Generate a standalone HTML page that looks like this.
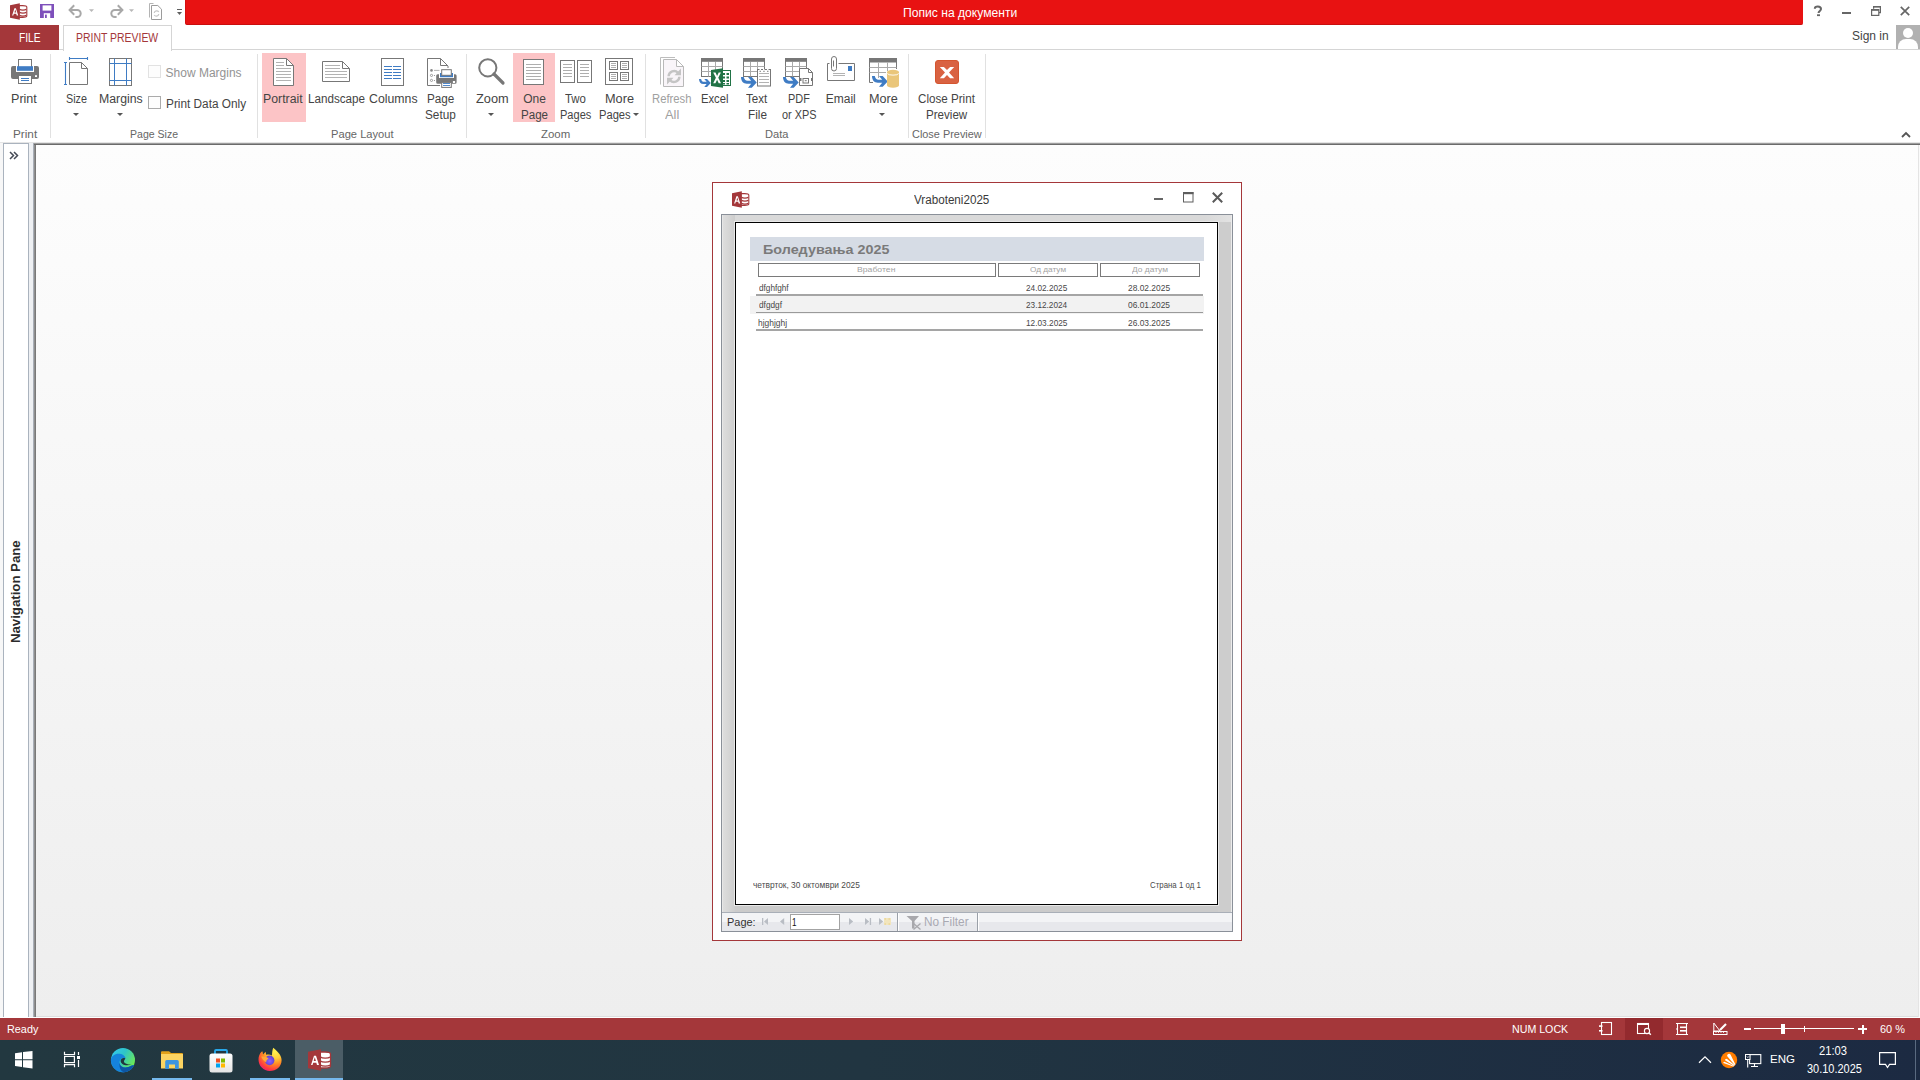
<!DOCTYPE html>
<html><head><meta charset="utf-8">
<style>
html,body{margin:0;padding:0;}
body{width:1920px;height:1080px;overflow:hidden;position:relative;background:#fff;font-family:"Liberation Sans",sans-serif;}
.a{position:absolute;}
.t{position:absolute;white-space:nowrap;}
svg{position:absolute;overflow:visible;}
</style></head><body>
<div class="a" style="left:185px;top:0px;width:1618px;height:25px;background:#e81212;box-sizing:border-box;border-bottom:1px solid #c90e0e;border-left:1px solid #d40f0f;border-radius:0 0 2px 2px;"></div>
<div class="t" style="left:902.78px;top:6.57px;font-size:12.5px;line-height:12.5px;color:#ffffff;transform:scaleX(0.9698);transform-origin:0 0;">Попис на документи</div>
<svg style="left:10px;top:3px" width="17" height="17" viewBox="0 0 17 17">
 <path d="M9 2.6 h3.6 a4.2 1.5 0 0 1 4.2 1.5 v8.8 a4.2 1.5 0 0 1 -4.2 1.5 H9z" fill="#fff" stroke="#a4373a" stroke-width="1.1"/>
 <path d="M9.5 6.3 a3.7 1.3 0 0 0 6.8 0 M9.5 9.3 a3.7 1.3 0 0 0 6.8 0 M9.5 12.3 a3.7 1.3 0 0 0 6.8 0" fill="none" stroke="#a4373a" stroke-width="1.1"/>
 <path d="M0 2.2 L9.8 0.3 V16.7 L0 14.8z" fill="#a4373a"/>
 <path d="M2.1 12.4 L4.4 5.2 h1.5 L8.2 12.4 h-1.5 l-0.5-1.7 h-2.4 l-0.5 1.7z M4.5 9.4 h1.7 L5.2 6.4z" fill="#fff"/>
</svg>
<svg style="left:40px;top:4px" width="14" height="14" viewBox="0 0 14 14">
 <rect x="0" y="0" width="14" height="14" fill="#7e50bb"/>
 <rect x="2.6" y="1.4" width="8.8" height="5.2" fill="#fff"/>
 <rect x="3.8" y="9.2" width="6.4" height="4.8" fill="#fff"/>
 <rect x="5" y="10.6" width="1.8" height="3.4" fill="#7e50bb"/>
</svg>
<svg style="left:68px;top:4px" width="28" height="14" viewBox="0 0 28 14">
 <path d="M2.5 6 H9.2 a3.5 3.5 0 0 1 0 7 H7.4" fill="none" stroke="#a8a8a8" stroke-width="2"/>
 <path d="M6.2 1.3 L1.6 6 L6.2 10.7" fill="none" stroke="#a8a8a8" stroke-width="2"/>
 <path d="M21 5.3 h5 l-2.5 2.6z" fill="#b8b8b8"/>
</svg>
<svg style="left:108px;top:4px" width="28" height="14" viewBox="0 0 28 14">
 <path d="M13.5 6 H6.8 a3.5 3.5 0 0 0 0 7 H8.6" fill="none" stroke="#a8a8a8" stroke-width="2"/>
 <path d="M9.8 1.3 L14.4 6 L9.8 10.7" fill="none" stroke="#a8a8a8" stroke-width="2"/>
 <path d="M21 5.3 h5 l-2.5 2.6z" fill="#b8b8b8"/>
</svg>
<svg style="left:149px;top:3px" width="14" height="17" viewBox="0 0 14 17">
 <path d="M0.5 14.5 V0.5 H4.5" fill="none" stroke="#b4b4b4" stroke-width="1"/>
 <path d="M2.5 2.5 H8.8 L12.5 6.2 V16.5 H2.5z" fill="#fff" stroke="#9c9c9c" stroke-width="1"/>
 <path d="M5.2 10 a2.5 2.5 0 0 1 4.6 -1 M9.8 11 a2.5 2.5 0 0 1 -4.6 1" fill="none" stroke="#c6c6c6" stroke-width="1.2"/>
</svg>
<svg style="left:176px;top:8px" width="7" height="8" viewBox="0 0 7 8">
 <rect x="1" y="1" width="5" height="1" fill="#5f5f5f"/>
 <path d="M1 4 h5 l-2.5 3z" fill="#5f5f5f"/>
</svg>
<svg style="left:1814px;top:6px" width="8" height="10" viewBox="0 0 8 10"><path d="M0.8 2.8 C0.8 1.2 2 0.5 3.8 0.5 C5.6 0.5 7 1.4 7 3 C7 4.8 4.6 5 4.6 6.8 V7" fill="none" stroke="#666" stroke-width="2"/><rect x="3" y="8.3" width="3" height="1.8" fill="#666"/></svg>
<div class="a" style="left:1842px;top:12px;width:9px;height:2px;background:#666;"></div>
<svg style="left:1871px;top:6px" width="11" height="10" viewBox="0 0 11 10">
 <path d="M2.6 2.8 V0.6 H9.4 V6.6 H8" fill="none" stroke="#666" stroke-width="1.2"/>
 <rect x="0.6" y="3.6" width="7.2" height="5.8" fill="none" stroke="#666" stroke-width="1.2"/>
 <rect x="0.6" y="3.2" width="7.2" height="1.6" fill="#666"/>
 <rect x="2.6" y="0" width="7" height="1.5" fill="#666"/>
</svg>
<svg style="left:1900px;top:6px" width="10" height="10" viewBox="0 0 10 10"><path d="M0.8 0.8 L9.2 9.2 M9.2 0.8 L0.8 9.2" stroke="#666" stroke-width="1.7"/></svg>
<div class="a" style="left:0px;top:49px;width:1920px;height:1px;background:#d5d5d5;"></div>
<div class="a" style="left:0px;top:25px;width:59px;height:25px;background:#a4373a;"></div>
<div class="t" style="left:18.86px;top:31.80px;font-size:12px;line-height:12px;color:#ffffff;transform:scaleX(0.8512);transform-origin:0 0;">FILE</div>
<div class="a" style="left:63px;top:25px;width:107px;height:25px;background:#fff;border:1px solid #d5d5d5;border-bottom:none;"></div>
<div class="t" style="left:75.64px;top:31.80px;font-size:12px;line-height:12px;color:#a4373a;transform:scaleX(0.8703);transform-origin:0 0;">PRINT PREVIEW</div>
<div class="t" style="left:1852.46px;top:30.27px;font-size:12.5px;line-height:12.5px;color:#444;transform:scaleX(0.9600);transform-origin:0 0;">Sign in</div>
<div class="a" style="left:1896px;top:25px;width:24px;height:24px;background:#b1b1b1;overflow:hidden;">
 <div class="a" style="left:7px;top:3px;width:10px;height:10px;border-radius:50%;background:#fff;"></div>
 <div class="a" style="left:2px;top:14px;width:20px;height:14px;border-radius:8px 8px 0 0;background:#fff;"></div>
</div>
<svg style="left:1901px;top:131px" width="10" height="7" viewBox="0 0 10 7"><path d="M1 6 L5 2 L9 6" fill="none" stroke="#555" stroke-width="1.8"/></svg>
<div class="a" style="left:50px;top:54px;width:1px;height:84px;background:#e1e1e1;"></div>
<div class="a" style="left:257px;top:54px;width:1px;height:84px;background:#e1e1e1;"></div>
<div class="a" style="left:466px;top:54px;width:1px;height:84px;background:#e1e1e1;"></div>
<div class="a" style="left:645px;top:54px;width:1px;height:84px;background:#e1e1e1;"></div>
<div class="a" style="left:908px;top:54px;width:1px;height:84px;background:#e1e1e1;"></div>
<div class="a" style="left:985px;top:54px;width:1px;height:84px;background:#e1e1e1;"></div>
<div class="a" style="left:262px;top:53px;width:44px;height:69px;background:#fcc4c6;"></div>
<div class="a" style="left:513px;top:53px;width:42px;height:69px;background:#fcc4c6;"></div>
<div class="t" style="left:11.36px;top:92.80px;font-size:12px;line-height:12px;color:#444;transform:scaleX(1.0475);transform-origin:0 0;">Print</div>
<div class="t" style="left:65.61px;top:92.80px;font-size:12px;line-height:12px;color:#444;transform:scaleX(0.9017);transform-origin:0 0;">Size</div>
<div class="t" style="left:98.59px;top:92.80px;font-size:12px;line-height:12px;color:#444;transform:scaleX(1.0247);transform-origin:0 0;">Margins</div>
<div class="t" style="left:165.56px;top:67.00px;font-size:12px;line-height:12px;color:#939393;">Show Margins</div>
<div class="t" style="left:165.73px;top:98.00px;font-size:12px;line-height:12px;color:#444;transform:scaleX(0.9846);transform-origin:0 0;">Print Data Only</div>
<div class="t" style="left:263.29px;top:92.80px;font-size:12px;line-height:12px;color:#444;transform:scaleX(1.0242);transform-origin:0 0;">Portrait</div>
<div class="t" style="left:307.54px;top:92.80px;font-size:12px;line-height:12px;color:#444;transform:scaleX(0.9719);transform-origin:0 0;">Landscape</div>
<div class="t" style="left:368.68px;top:92.80px;font-size:12px;line-height:12px;color:#444;transform:scaleX(1.0255);transform-origin:0 0;">Columns</div>
<div class="t" style="left:427.43px;top:92.80px;font-size:12px;line-height:12px;color:#444;transform:scaleX(0.9766);transform-origin:0 0;">Page</div>
<div class="t" style="left:425.37px;top:108.50px;font-size:12px;line-height:12px;color:#444;transform:scaleX(0.9825);transform-origin:0 0;">Setup</div>
<div class="t" style="left:475.58px;top:92.80px;font-size:12px;line-height:12px;color:#444;transform:scaleX(1.0648);transform-origin:0 0;">Zoom</div>
<div class="t" style="left:523.23px;top:92.80px;font-size:12px;line-height:12px;color:#444;">One</div>
<div class="t" style="left:520.64px;top:108.50px;font-size:12px;line-height:12px;color:#444;transform:scaleX(0.9653);transform-origin:0 0;">Page</div>
<div class="t" style="left:565.24px;top:92.80px;font-size:12px;line-height:12px;color:#444;transform:scaleX(0.9510);transform-origin:0 0;">Two</div>
<div class="t" style="left:559.89px;top:108.50px;font-size:12px;line-height:12px;color:#444;transform:scaleX(0.9200);transform-origin:0 0;">Pages</div>
<div class="t" style="left:604.75px;top:92.80px;font-size:12px;line-height:12px;color:#444;transform:scaleX(1.0608);transform-origin:0 0;">More</div>
<div class="t" style="left:598.78px;top:108.50px;font-size:12px;line-height:12px;color:#444;transform:scaleX(0.9292);transform-origin:0 0;">Pages</div>
<div class="t" style="left:651.77px;top:92.80px;font-size:12px;line-height:12px;color:#a0a0a0;transform:scaleX(0.9389);transform-origin:0 0;">Refresh</div>
<div class="t" style="left:665.17px;top:108.50px;font-size:12px;line-height:12px;color:#a0a0a0;transform:scaleX(1.0711);transform-origin:0 0;">All</div>
<div class="t" style="left:700.77px;top:92.80px;font-size:12px;line-height:12px;color:#444;transform:scaleX(0.9368);transform-origin:0 0;">Excel</div>
<div class="t" style="left:745.84px;top:92.80px;font-size:12px;line-height:12px;color:#444;transform:scaleX(0.9616);transform-origin:0 0;">Text</div>
<div class="t" style="left:747.63px;top:108.50px;font-size:12px;line-height:12px;color:#444;transform:scaleX(0.9820);transform-origin:0 0;">File</div>
<div class="t" style="left:787.70px;top:92.80px;font-size:12px;line-height:12px;color:#444;transform:scaleX(0.9099);transform-origin:0 0;">PDF</div>
<div class="t" style="left:782.14px;top:108.50px;font-size:12px;line-height:12px;color:#444;transform:scaleX(0.9064);transform-origin:0 0;">or XPS</div>
<div class="t" style="left:825.71px;top:92.80px;font-size:12px;line-height:12px;color:#444;">Email</div>
<div class="t" style="left:868.76px;top:92.80px;font-size:12px;line-height:12px;color:#444;transform:scaleX(1.0530);transform-origin:0 0;">More</div>
<div class="t" style="left:918.02px;top:92.80px;font-size:12px;line-height:12px;color:#444;transform:scaleX(0.9691);transform-origin:0 0;">Close Print</div>
<div class="t" style="left:925.64px;top:108.50px;font-size:12px;line-height:12px;color:#444;transform:scaleX(0.9657);transform-origin:0 0;">Preview</div>
<div class="t" style="left:12.73px;top:129.05px;font-size:11px;line-height:11px;color:#666;transform:scaleX(1.0687);transform-origin:0 0;">Print</div>
<div class="t" style="left:129.73px;top:129.05px;font-size:11px;line-height:11px;color:#666;transform:scaleX(0.9578);transform-origin:0 0;">Page Size</div>
<div class="t" style="left:330.58px;top:129.05px;font-size:11px;line-height:11px;color:#666;transform:scaleX(1.0136);transform-origin:0 0;">Page Layout</div>
<div class="t" style="left:540.73px;top:129.05px;font-size:11px;line-height:11px;color:#666;transform:scaleX(1.0395);transform-origin:0 0;">Zoom</div>
<div class="t" style="left:764.99px;top:129.05px;font-size:11px;line-height:11px;color:#666;transform:scaleX(1.0076);transform-origin:0 0;">Data</div>
<div class="t" style="left:912.15px;top:129.05px;font-size:11px;line-height:11px;color:#666;transform:scaleX(0.9915);transform-origin:0 0;">Close Preview</div>
<svg style="left:72.5px;top:113px" width="6" height="3" viewBox="0 0 6 3"><path d="M0 0 H6 L3 3z" fill="#555"/></svg>
<svg style="left:117.4px;top:113px" width="6" height="3" viewBox="0 0 6 3"><path d="M0 0 H6 L3 3z" fill="#555"/></svg>
<svg style="left:488.4px;top:113px" width="6" height="3" viewBox="0 0 6 3"><path d="M0 0 H6 L3 3z" fill="#555"/></svg>
<svg style="left:879.3px;top:113px" width="6" height="3" viewBox="0 0 6 3"><path d="M0 0 H6 L3 3z" fill="#555"/></svg>
<svg style="left:632.8px;top:113px" width="6" height="3" viewBox="0 0 6 3"><path d="M0 0 H6 L3 3z" fill="#555"/></svg>
<div class="a" style="left:148px;top:65px;width:13px;height:13px;background:#fdfdfd;box-sizing:border-box;border:1px solid #e2e2e2;"></div>
<div class="a" style="left:148px;top:96px;width:13px;height:13px;background:#fdfdfd;box-sizing:border-box;border:1px solid #ababab;"></div>
<svg style="left:11px;top:59px" width="28" height="26" viewBox="0 0 28 26">
 <path d="M2 7 H5 V13 H23 V7 H26 a2 2 0 0 1 2 2 V18 a2 2 0 0 1 -2 2 H2 a2 2 0 0 1 -2 -2 V9 a2 2 0 0 1 2 -2z" fill="#777"/>
 <rect x="7.5" y="0.5" width="13" height="8" fill="#fff" stroke="#777"/>
 <rect x="6" y="7.2" width="16" height="4.6" fill="#3f7cc4"/>
 <rect x="7.5" y="16.5" width="13" height="8" fill="#fff" stroke="#777"/>
 <rect x="10" y="19" width="8" height="1" fill="#3f7cc4"/>
 <rect x="10" y="21" width="8" height="1" fill="#3f7cc4"/>
 <rect x="24" y="16.2" width="2" height="1.8" fill="#fff"/>
</svg>
<svg style="left:63px;top:56px" width="27" height="30" viewBox="0 0 27 30">
 <path d="M2.5 6.5 V28.5 M1 6.5 H4 M1 28.5 H4 M6.5 2.5 H24.5 M6.5 1 V4 M24.5 1 V4" stroke="#3f7cc4" stroke-width="1.1" fill="none"/>
 <path d="M6.5 6.5 H18.5 L24.5 12.5 V28.5 H6.5z M18.5 6.5 V12.5 H24.5" fill="#fff" stroke="#777" stroke-width="1"/>
</svg>
<svg style="left:109px;top:58px" width="23" height="28" viewBox="0 0 23 28">
 <rect x="0.5" y="0.5" width="22" height="27" fill="#fff" stroke="#777"/>
 <path d="M5.5 0.5 V27.5 M17.5 0.5 V27.5 M0.5 5.5 H22.5 M0.5 22.5 H22.5" stroke="#3f7cc4" stroke-width="1"/>
</svg>
<svg style="left:273px;top:58px" width="21" height="28" viewBox="0 0 21 28">
 <path d="M0.5 0.5 H13.5 L20.5 7.5 V27.5 H0.5z" fill="#fff"/><path d="M13.5 0.5 L20.5 7.5 H13.5z" fill="#fff"/>
 <path d="M0.5 0.5 H13.5 L20.5 7.5 V27.5 H0.5z M13.5 0.5 V7.5 H20.5" fill="none" stroke="#777" stroke-width="1"/>
 <path d="M3 4.5 H11 M3 7.5 H11 M3 10.5 H18 M3 13.5 H18 M3 16.5 H18 M3 19.5 H18 M3 22.5 H18" stroke="#aaa" stroke-width="0.9"/>
</svg>
<svg style="left:322px;top:61px" width="28" height="21" viewBox="0 0 28 21">
 <path d="M0.5 0.5 H20.5 L27.5 7.5 V20.5 H0.5z M20.5 0.5 V7.5 H27.5" fill="#fff" stroke="#777" stroke-width="1"/>
 <path d="M3 4.5 H18 M3 7.5 H18 M3 10.5 H25 M3 13.5 H25 M3 16.5 H25" stroke="#aaa" stroke-width="0.9"/>
</svg>
<svg style="left:381px;top:58px" width="23" height="28" viewBox="0 0 23 28">
 <rect x="0.5" y="0.5" width="22" height="27" fill="#fff" stroke="#777"/>
 <path d="M3 8.5 H11 M12 8.5 H20 M3 11.5 H11 M12 11.5 H20 M3 14.5 H11 M12 14.5 H20 M3 17.5 H11 M12 17.5 H20 M3 20.5 H11 M12 20.5 H20" stroke="#3f7cc4" stroke-width="1"/>
</svg>
<svg style="left:427px;top:58px" width="30" height="30" viewBox="0 0 30 30">
 <path d="M13 27.5 H0.5 V0.5 H13.5 L21 8 V10" fill="#fff" stroke="#777" stroke-width="1"/>
 <path d="M13.5 0.5 V7.5 H21" fill="none" stroke="#777" stroke-width="1"/>
 <circle cx="4.5" cy="12.4" r="1.3" fill="#888"/>
 <path d="M7 12.4 H12.5" stroke="#aaa" stroke-width="0.9"/>
 <circle cx="4.5" cy="17.4" r="1.1" fill="none" stroke="#888" stroke-width="0.8"/>
 <circle cx="4.5" cy="22.4" r="1.1" fill="none" stroke="#888" stroke-width="0.8"/>
 <rect x="7" y="17" width="1" height="1" fill="#999"/><rect x="7" y="22" width="1" height="1" fill="#999"/>
 <path d="M10.7 16.2 H12 V20 H27 V16.2 H28.1 a1.5 1.5 0 0 1 1.5 1.5 V24.3 a1.5 1.5 0 0 1 -1.5 1.5 H10.7 a1.5 1.5 0 0 1 -1.5 -1.5 V17.7 a1.5 1.5 0 0 1 1.5 -1.5z" fill="#777"/>
 <rect x="13" y="15" width="13" height="4.2" fill="#3f7cc4"/>
 <rect x="14.7" y="11.7" width="9.6" height="5.6" fill="#fff" stroke="#777" stroke-width="1"/>
 <rect x="14.7" y="24.4" width="9.6" height="5" fill="#fff" stroke="#777" stroke-width="1"/>
 <rect x="16" y="25" width="7" height="0.9" fill="#3f7cc4"/><rect x="16" y="27" width="7" height="0.9" fill="#3f7cc4"/>
 <rect x="25.9" y="23" width="2.2" height="2" fill="#fff"/>
</svg>
<svg style="left:477px;top:57px" width="29" height="29" viewBox="0 0 29 29">
 <circle cx="10.8" cy="10.8" r="8.6" fill="none" stroke="#777" stroke-width="2"/>
 <path d="M17 17 L26 26" stroke="#777" stroke-width="3.2" stroke-linecap="round"/>
</svg>
<svg style="left:523px;top:59px" width="21" height="26" viewBox="0 0 21 26">
 <rect x="0.5" y="0.5" width="20" height="25" fill="#fff" stroke="#777"/>
 <path d="M3 5.5 H18 M3 8.5 H18 M3 11.5 H18 M3 14.5 H18 M3 17.5 H18 M3 20.5 H18" stroke="#999" stroke-width="0.8"/>
</svg>
<svg style="left:560px;top:60px" width="33" height="23" viewBox="0 0 33 23">
 <rect x="0.5" y="0.5" width="14" height="22" fill="#fff" stroke="#777"/>
 <rect x="17.5" y="0.5" width="14" height="22" fill="#fff" stroke="#777"/>
 <path d="M3 4.5 H12 M3 7.5 H12 M3 10.5 H12 M3 13.5 H12 M3 16.5 H12 M20 4.5 H29 M20 7.5 H29 M20 10.5 H29 M20 13.5 H29 M20 16.5 H29" stroke="#999" stroke-width="0.8"/>
</svg>
<svg style="left:605px;top:58px" width="28" height="27" viewBox="0 0 28 27">
 <rect x="0.5" y="0.5" width="27" height="26" fill="#fff" stroke="#777"/>
 <rect x="4.5" y="3.5" width="8" height="8" fill="#fff" stroke="#777"/>
 <rect x="15.5" y="3.5" width="8" height="8" fill="#fff" stroke="#777"/>
 <rect x="4.5" y="14.5" width="8" height="8" fill="#fff" stroke="#777"/>
 <rect x="15.5" y="14.5" width="8" height="8" fill="#fff" stroke="#777"/>
 <path d="M6 5.5 H11 M6 7.5 H11 M6 9.5 H11 M17 5.5 H22 M17 7.5 H22 M17 9.5 H22 M6 16.5 H11 M6 18.5 H11 M6 20.5 H11 M17 16.5 H22 M17 18.5 H22 M17 20.5 H22" stroke="#999" stroke-width="0.8"/>
</svg>
<svg style="left:660px;top:57px" width="24" height="30" viewBox="0 0 24 30">
 <path d="M0.5 27.5 V0.5 H15" fill="none" stroke="#bdbdbd" stroke-width="1"/>
 <path d="M3.5 2.5 H16.5 L23.5 9.5 V29.5 H3.5z M16.5 2.5 V9.5 H23.5" fill="#f9f5f9" stroke="#b9b9b9" stroke-width="1"/>
 <path d="M8.6 19.2 A5.4 5.4 0 0 1 18 15.8" fill="none" stroke="#c4c4c4" stroke-width="2.4"/>
 <path d="M19.4 19.8 A5.4 5.4 0 0 1 10 23.2" fill="none" stroke="#c4c4c4" stroke-width="2.4"/>
 <path d="M21 11.5 V18.2 H14.5z M7 27.5 V20.8 H13.5z" fill="#c4c4c4"/>
</svg>
<svg style="left:699px;top:58px" width="32" height="30" viewBox="0 0 32 30"><rect x="2.5" y="0.5" width="21" height="18" fill="#fff" stroke="#777"/><rect x="2" y="0" width="22" height="3.8" fill="#777"/><path d="M9.5 4 V18.5 M16.5 4 V18.5 M2.5 8.5 H23.5 M2.5 13.5 H23.5" stroke="#aaa" stroke-width="1"/><path transform="translate(0,21) scale(0.75)" d="M0 0 H2.8 C3.2 2.3 4.5 3.8 6.5 3.8 H10.2 L7 0 H10.7 L15.7 5.4 L10.7 10.8 H7 L10.2 6.7 H5.8 C2.4 6.7 0 4.2 0 0z" fill="#3f7cc4"/><rect x="22.5" y="12.5" width="9" height="15" fill="#fff" stroke="#217346" stroke-width="1"/><path d="M24 15 h2 v2 h-2z M27.5 15 h2.5 v2 h-2.5z M24 18.5 h2 v2 h-2z M27.5 18.5 h2.5 v2 h-2.5z M24 22 h2 v2 h-2z M27.5 22 h2.5 v2 h-2.5z M24 25 h2 v1.5 h-2z M27.5 25 h2.5 v1.5 h-2.5z" fill="#217346"/><path d="M12 12 L24 10.2 V29.8 L12 28z" fill="#217346"/><path d="M14.2 14.6 h2.3 l1.6 3.3 l1.6 -3.3 h2.2 l-2.6 5.2 l2.7 5.4 h-2.3 l-1.6 -3.4 l-1.7 3.4 h-2.2 l2.7 -5.4z" fill="#fff"/></svg>
<svg style="left:741px;top:58px" width="30" height="31" viewBox="0 0 30 31"><rect x="2.5" y="0.5" width="21" height="18" fill="#fff" stroke="#777"/><rect x="2" y="0" width="22" height="3.8" fill="#777"/><path d="M9.5 4 V18.5 M16.5 4 V18.5 M2.5 8.5 H23.5 M2.5 13.5 H23.5" stroke="#aaa" stroke-width="1"/><rect x="16.5" y="11.5" width="13" height="16.5" fill="#fff" stroke="#777"/><path d="M18.5 11.5 h1.5 M22 11.5 h1.5 M26 11.5 h1.5" stroke="#fff" stroke-width="1.2"/><path d="M18.5 13.3 h1.5 M22.2 13.3 h1.5 M26 13.3 h1.5" stroke="#999" stroke-width="1.2"/><path d="M18 15.5 H28 M18 18.5 H28 M18 21.5 H28 M18 24.5 H28" stroke="#aaa" stroke-width="0.9"/><path transform="translate(0,19) scale(1)" d="M0 0 H2.8 C3.2 2.3 4.5 3.8 6.5 3.8 H10.2 L7 0 H10.7 L15.7 5.4 L10.7 10.8 H7 L10.2 6.7 H5.8 C2.4 6.7 0 4.2 0 0z" fill="#3f7cc4"/></svg>
<svg style="left:783px;top:58px" width="30" height="31" viewBox="0 0 30 31"><rect x="2.5" y="0.5" width="21" height="18" fill="#fff" stroke="#777"/><rect x="2" y="0" width="22" height="3.8" fill="#777"/><path d="M9.5 4 V18.5 M16.5 4 V18.5 M2.5 8.5 H23.5 M2.5 13.5 H23.5" stroke="#aaa" stroke-width="1"/><path d="M16.5 10.5 H25.5 L29.5 14.5 V27.5 H16.5z M25.5 10.5 V14.5 H29.5" fill="#fff" stroke="#777"/><rect x="20" y="20.5" width="5.5" height="4.5" fill="none" stroke="#777"/><path d="M21.8 22.7 H23.7" stroke="#777"/><rect x="16.5" y="20" width="2" height="3" fill="#777"/><rect x="28" y="20" width="2" height="3" fill="#777"/><path transform="translate(0,19) scale(1)" d="M0 0 H2.8 C3.2 2.3 4.5 3.8 6.5 3.8 H10.2 L7 0 H10.7 L15.7 5.4 L10.7 10.8 H7 L10.2 6.7 H5.8 C2.4 6.7 0 4.2 0 0z" fill="#3f7cc4"/></svg>
<svg style="left:827px;top:56px" width="29" height="26" viewBox="0 0 29 26">
 <path d="M2.5 7.5 H0.5 V24.5 H27.5 V7.5 H11.5" fill="#fff" stroke="#777" stroke-width="1"/>
 <path d="M4.5 7.5 V3 a2.5 2.5 0 0 1 5 0 V12.5 a2.5 2.5 0 0 1 -5 0 V4" fill="none" stroke="#777" stroke-width="1"/>
 <path d="M6.5 4.5 V10.5" stroke="#777" stroke-width="1"/>
 <rect x="21" y="10" width="4" height="5" fill="#3f7cc4"/>
 <path d="M6 17.5 H18 M6 19.5 H18" stroke="#aaa" stroke-width="0.9"/>
</svg>
<svg style="left:869px;top:58px" width="30" height="30" viewBox="0 0 30 30"><path d="M0.5 24.5 V0.5 H27.5 V11" fill="#fff" stroke="#777"/><rect x="0" y="0" width="28" height="4.5" fill="#777"/><path d="M9.5 4.5 V20 M18.5 4.5 V13 M0.5 9.5 H27.5 M0.5 14.5 H17" stroke="#aaa" stroke-width="1"/><path d="M0.5 24.5 H4" stroke="#777"/><path transform="translate(3,18) scale(1)" d="M0 0 H2.8 C3.2 2.3 4.5 3.8 6.5 3.8 H10.2 L7 0 H10.7 L15.7 5.4 L10.7 10.8 H7 L10.2 6.7 H5.8 C2.4 6.7 0 4.2 0 0z" fill="#3f7cc4"/><path d="M18 14 a6 2.2 0 0 1 12 0 V27.5 a6 2.2 0 0 1 -12 0z" fill="#eac67a"/><path d="M18.3 15.5 a5.8 2 0 0 0 11.4 0" fill="none" stroke="#fff" stroke-width="0.9"/></svg>
<svg style="left:935px;top:60px" width="24" height="24" viewBox="0 0 24 24">
 <rect x="0.5" y="0.5" width="23" height="23" rx="2.5" fill="#d96242" stroke="#d4552f" stroke-width="1"/>
 <path d="M4.8 7.1 H8.9 L12 10 L15.1 7.1 H19.2 L14 12.6 L19.2 18.2 H15.1 L12 15.1 L8.9 18.2 H4.8 L10 12.6z" fill="#fff"/>
</svg>
<div class="a" style="left:0px;top:142px;width:1920px;height:1px;background:#e5e5e5;"></div>
<div class="a" style="left:34px;top:143px;width:1886px;height:1px;background:#9c9c9c;"></div>
<div class="a" style="left:34px;top:144px;width:1886px;height:1px;background:#6b6b6b;"></div>
<div class="a" style="left:0px;top:143px;width:34px;height:875px;background:#f7f7f7;"></div>
<div class="a" style="left:36px;top:145px;width:1882px;height:871px;background:linear-gradient(#fdfdfd,#eeeeee);"></div>
<div class="a" style="left:1918px;top:145px;width:1px;height:873px;background:#e4e4e4;"></div>
<div class="a" style="left:1919px;top:145px;width:1px;height:873px;background:#fafafa;"></div>
<div class="a" style="left:36px;top:1016px;width:1882px;height:1px;background:#dedede;"></div>
<div class="a" style="left:0px;top:1017px;width:1920px;height:1px;background:#ffffff;"></div>
<div class="a" style="left:34px;top:145px;width:2px;height:872px;background:linear-gradient(90deg,#9a9a9a,#6e6e6e);"></div>
<div class="a" style="left:3px;top:143px;width:26px;height:874px;background:#ffffff;box-sizing:border-box;border:1px solid #aab3be;border-bottom:none;"></div>
<div class="a" style="left:29px;top:143px;width:5px;height:874px;background:#eef0f3;"></div>
<div class="a" style="left:33px;top:143px;width:1px;height:874px;background:#a9afb8;"></div>
<svg style="left:9.2px;top:151.2px" width="10" height="9" viewBox="0 0 10 9"><path d="M1 1 L4.5 4.5 L1 8 M5 1 L8.5 4.5 L5 8" fill="none" stroke="#454a55" stroke-width="1.5"/></svg>
<div class="t" style="left:9.4px;top:642.6px;font-size:13px;line-height:13px;font-weight:bold;color:#2b2b2b;transform:rotate(-90deg) scaleX(1.015);transform-origin:0 0;">Navigation Pane</div>
<div class="a" style="left:712px;top:182px;width:530px;height:759px;background:#ffffff;box-sizing:border-box;border:1px solid #a4373a;"></div>
<svg style="left:732px;top:191px" width="17" height="17" viewBox="0 0 17 17">
 <path d="M9 2.6 h3.6 a4.2 1.5 0 0 1 4.2 1.5 v8.8 a4.2 1.5 0 0 1 -4.2 1.5 H9z" fill="#fff" stroke="#a4373a" stroke-width="1.1"/>
 <path d="M9.5 6.3 a3.7 1.3 0 0 0 6.8 0 M9.5 9.3 a3.7 1.3 0 0 0 6.8 0 M9.5 12.3 a3.7 1.3 0 0 0 6.8 0" fill="none" stroke="#a4373a" stroke-width="1.1"/>
 <path d="M0 2.2 L9.8 0.3 V16.7 L0 14.8z" fill="#a4373a"/>
 <path d="M2.1 12.4 L4.4 5.2 h1.5 L8.2 12.4 h-1.5 l-0.5-1.7 h-2.4 l-0.5 1.7z M4.5 9.4 h1.7 L5.2 6.4z" fill="#fff"/>
</svg>
<div class="t" style="left:913.94px;top:193.70px;font-size:12px;line-height:12px;color:#3a3a3a;transform:scaleX(0.9705);transform-origin:0 0;">Vraboteni2025</div>
<div class="a" style="left:1154px;top:198px;width:9px;height:2px;background:#666;"></div>
<svg style="left:1183px;top:192px" width="11" height="11" viewBox="0 0 11 11"><rect x="0.5" y="0.5" width="9.5" height="9.5" fill="none" stroke="#5e5e5e" stroke-width="1"/><rect x="0" y="0" width="10.5" height="2.2" fill="#5e5e5e"/></svg>
<svg style="left:1212px;top:192px" width="11" height="11" viewBox="0 0 11 11"><path d="M0.8 0.8 L10.2 10.2 M10.2 0.8 L0.8 10.2" stroke="#5a5a5a" stroke-width="2"/></svg>
<div class="a" style="left:721px;top:214px;width:512px;height:718px;background:#d3d3d3;box-sizing:border-box;border:1px solid #8a9099;"></div>
<div class="a" style="left:722px;top:215px;width:510px;height:697px;background:linear-gradient(#d9d9d9,#d4d4d4);"></div>
<div class="a" style="left:722px;top:215px;width:13px;height:697px;background:linear-gradient(90deg,#dedede,#cdcdcd);"></div>
<div class="a" style="left:1218px;top:222px;width:13px;height:690px;background:#cdcdcd;"></div>
<div class="a" style="left:1205px;top:215px;width:26px;height:7px;background:linear-gradient(90deg,#d9d9d9,#e2e2e2);"></div>
<div class="a" style="left:735px;top:905px;width:483px;height:7px;background:#cbcbcb;"></div>
<div class="a" style="left:722px;top:215px;width:1px;height:697px;background:#e6e6e6;"></div>
<div class="a" style="left:1231px;top:215px;width:1px;height:697px;background:#ececec;"></div>
<div class="a" style="left:734px;top:221px;width:485px;height:685px;background:#e8e8e8;"></div>
<div class="a" style="left:735px;top:222px;width:483px;height:683px;background:#ffffff;box-sizing:border-box;border:1px solid #000;"></div>
<div class="a" style="left:750px;top:237px;width:454px;height:24px;background:#d6dce5;"></div>
<div class="t" style="left:763.43px;top:243.33px;font-size:13.5px;line-height:13.5px;color:#7a7a7a;font-weight:bold;transform:scaleX(1.0628);transform-origin:0 0;">Боледувања 2025</div>
<div class="a" style="left:758px;top:263px;width:238px;height:14px;background:#ffffff;box-sizing:border-box;border:1px solid #7a7a7a;"></div>
<div class="a" style="left:998px;top:263px;width:100px;height:14px;background:#ffffff;box-sizing:border-box;border:1px solid #7a7a7a;"></div>
<div class="a" style="left:1100px;top:263px;width:100px;height:14px;background:#ffffff;box-sizing:border-box;border:1px solid #7a7a7a;"></div>
<div class="t" style="left:857.19px;top:266.20px;font-size:8px;line-height:8px;color:#a3a3a3;transform:scaleX(1.0810);transform-origin:0 0;">Вработен</div>
<div class="t" style="left:1029.51px;top:266.20px;font-size:8px;line-height:8px;color:#a3a3a3;transform:scaleX(1.0287);transform-origin:0 0;">Од датум</div>
<div class="t" style="left:1131.64px;top:266.20px;font-size:8px;line-height:8px;color:#a3a3a3;transform:scaleX(1.0481);transform-origin:0 0;">До датум</div>
<div class="a" style="left:750px;top:296px;width:454px;height:18px;background:#f2f2f2;"></div>
<div class="a" style="left:756px;top:294px;width:447px;height:2px;background:#a5a5a5;"></div>
<div class="a" style="left:756px;top:312px;width:447px;height:1px;background:#9a9a9a;"></div>
<div class="a" style="left:756px;top:329px;width:447px;height:2px;background:#a5a5a5;"></div>
<div class="t" style="left:758.55px;top:283.77px;font-size:8.5px;line-height:8.5px;color:#474747;transform:scaleX(0.9642);transform-origin:0 0;">dfghfghf</div>
<div class="t" style="left:1026.49px;top:283.77px;font-size:8.5px;line-height:8.5px;color:#474747;transform:scaleX(0.9694);transform-origin:0 0;">24.02.2025</div>
<div class="t" style="left:1128.28px;top:283.77px;font-size:8.5px;line-height:8.5px;color:#474747;transform:scaleX(0.9886);transform-origin:0 0;">28.02.2025</div>
<div class="t" style="left:758.65px;top:300.57px;font-size:8.5px;line-height:8.5px;color:#474747;transform:scaleX(0.9704);transform-origin:0 0;">dfgdgf</div>
<div class="t" style="left:1026.49px;top:300.57px;font-size:8.5px;line-height:8.5px;color:#474747;transform:scaleX(0.9670);transform-origin:0 0;">23.12.2024</div>
<div class="t" style="left:1128.36px;top:300.57px;font-size:8.5px;line-height:8.5px;color:#474747;transform:scaleX(0.9866);transform-origin:0 0;">06.01.2025</div>
<div class="t" style="left:758.41px;top:318.57px;font-size:8.5px;line-height:8.5px;color:#474747;transform:scaleX(0.9916);transform-origin:0 0;">hjghjghj</div>
<div class="t" style="left:1026.28px;top:318.57px;font-size:8.5px;line-height:8.5px;color:#474747;transform:scaleX(0.9744);transform-origin:0 0;">12.03.2025</div>
<div class="t" style="left:1128.28px;top:318.57px;font-size:8.5px;line-height:8.5px;color:#474747;transform:scaleX(0.9886);transform-origin:0 0;">26.03.2025</div>
<div class="t" style="left:752.50px;top:880.77px;font-size:8.5px;line-height:8.5px;color:#4a4a4a;transform:scaleX(0.9821);transform-origin:0 0;">четврток, 30 октомври 2025</div>
<div class="t" style="left:1149.61px;top:880.57px;font-size:8.5px;line-height:8.5px;color:#4a4a4a;transform:scaleX(0.9242);transform-origin:0 0;">Страна 1 од 1</div>
<div class="a" style="left:722px;top:912px;width:510px;height:1px;background:#a9afb8;"></div>
<div class="a" style="left:722px;top:913px;width:510px;height:9px;background:#f3f4f6;"></div>
<div class="a" style="left:722px;top:922px;width:510px;height:9px;background:#e7e8ec;"></div>
<div class="t" style="left:726.70px;top:916.83px;font-size:11.5px;line-height:11.5px;color:#333333;transform:scaleX(0.9515);transform-origin:0 0;">Page:</div>
<svg style="left:762px;top:918px" width="7" height="7" viewBox="0 0 7 7"><rect x="0" y="0" width="1.3" height="7" fill="#b9bdc4"/><path d="M6 0 V7 L2 3.5z" fill="#b9bdc4"/></svg>
<svg style="left:780px;top:918px" width="5" height="7" viewBox="0 0 5 7"><path d="M4.2 0 V7 L0 3.5z" fill="#b9bdc4"/></svg>
<div class="a" style="left:790px;top:914px;width:50px;height:16px;background:#ffffff;box-sizing:border-box;border:1px solid #a3a3a3;"></div>
<div class="t" style="left:792.29px;top:916.62px;font-size:11.5px;line-height:11.5px;color:#111;transform:scaleX(0.7037);transform-origin:0 0;">1</div>
<svg style="left:849px;top:918px" width="5" height="7" viewBox="0 0 5 7"><path d="M0 0 V7 L4.2 3.5z" fill="#b9bdc4"/></svg>
<svg style="left:865px;top:918px" width="7" height="7" viewBox="0 0 7 7"><path d="M0 0 V7 L4.2 3.5z" fill="#b9bdc4"/><rect x="4.8" y="0" width="1.3" height="7" fill="#b9bdc4"/></svg>
<svg style="left:879px;top:918px" width="13" height="7" viewBox="0 0 13 7"><path d="M0 0 V7 L4.2 3.5z" fill="#b9bdc4"/><rect x="5" y="0" width="7" height="7" fill="#f2e5bd"/><path d="M5.5 1 h1.5 M9.5 1 h1.5 M5.5 6 h1.5 M9.5 6 h1.5" stroke="#e7cf86" stroke-width="1"/></svg>
<div class="a" style="left:897px;top:913px;width:1px;height:18px;background:#9aa0a8;"></div>
<div class="a" style="left:898px;top:913px;width:1px;height:18px;background:#ffffff;"></div>
<svg style="left:906px;top:915px" width="16" height="15" viewBox="0 0 16 15"><path d="M0.5 1 H13 L8.5 6 V13.5 H6 V6z" fill="#a8a8ac"/>
 <path d="M7.5 8.5 L14.5 14.5 M14.5 8.5 L7.5 14.5" stroke="#a8a8ac" stroke-width="1.3"/></svg>
<div class="t" style="left:923.63px;top:915.70px;font-size:12px;line-height:12px;color:#a9a9b2;transform:scaleX(0.9828);transform-origin:0 0;">No Filter</div>
<div class="a" style="left:977px;top:913px;width:1px;height:18px;background:#9aa0a8;"></div>
<div class="a" style="left:978px;top:913px;width:1px;height:18px;background:#ffffff;"></div>
<div class="a" style="left:0px;top:1018px;width:1920px;height:22px;background:#a4373a;"></div>
<div class="t" style="left:6.61px;top:1023.75px;font-size:11px;line-height:11px;color:#ffffff;transform:scaleX(0.9853);transform-origin:0 0;">Ready</div>
<div class="t" style="left:1511.92px;top:1023.65px;font-size:11px;line-height:11px;color:#ffffff;transform:scaleX(0.9678);transform-origin:0 0;">NUM LOCK</div>
<div class="a" style="left:1625px;top:1018px;width:38px;height:22px;background:#932a2e;"></div>
<svg style="left:1599px;top:1022px" width="14" height="13" viewBox="0 0 14 13"><rect x="2.5" y="0.5" width="10" height="12" fill="none" stroke="#fff" stroke-width="1.1"/><rect x="0" y="3.3" width="3.5" height="1.6" fill="#fff"/><rect x="0" y="8" width="3.5" height="1.6" fill="#fff"/></svg>
<svg style="left:1637px;top:1023px" width="16" height="13" viewBox="0 0 16 13"><rect x="0.5" y="0.5" width="11" height="10" fill="none" stroke="#fff" stroke-width="1.1"/><rect x="0" y="0" width="12" height="2" fill="#fff"/><circle cx="10" cy="8" r="2.6" fill="#932a2e" stroke="#fff" stroke-width="1.1"/><path d="M11.8 9.8 L13.8 11.8" stroke="#fff" stroke-width="1.4"/></svg>
<svg style="left:1676px;top:1023px" width="13" height="12" viewBox="0 0 13 12"><path d="M0 0.5 H12 M0 11.5 H12 M1.5 0.5 V11.5 M10.5 0.5 V11.5" stroke="#fff" stroke-width="1.1" fill="none"/><rect x="4" y="3.5" width="6" height="1.6" fill="#fff"/><rect x="4" y="7" width="6" height="1.6" fill="#fff"/><rect x="0" y="5.5" width="2" height="1" fill="#fff"/></svg>
<svg style="left:1713px;top:1022px" width="15" height="13" viewBox="0 0 15 13"><path d="M0.8 1 V9 H7z" fill="none" stroke="#fff" stroke-width="1"/><path d="M7 8 L13 2" stroke="#fff" stroke-width="2.2"/><rect x="0.5" y="9.5" width="13.5" height="3" fill="none" stroke="#fff" stroke-width="1"/><path d="M3 10 V11 M5.5 10 V11 M8 10 V11 M10.5 10 V11" stroke="#fff" stroke-width="0.8"/></svg>
<div class="a" style="left:1744px;top:1028px;width:7px;height:2px;background:#ffffff;"></div>
<div class="a" style="left:1754px;top:1028px;width:100px;height:1px;background:#ffffff;"></div>
<div class="a" style="left:1781px;top:1024px;width:4px;height:10px;background:#ffffff;"></div>
<div class="a" style="left:1804px;top:1026px;width:1px;height:6px;background:#ffffff;"></div>
<div class="a" style="left:1858px;top:1028px;width:9px;height:2px;background:#ffffff;"></div>
<div class="a" style="left:1861.5px;top:1024.5px;width:2px;height:9px;background:#ffffff;"></div>
<div class="t" style="left:1880.45px;top:1023.65px;font-size:11px;line-height:11px;color:#ffffff;transform:scaleX(0.9940);transform-origin:0 0;">60 %</div>
<div class="a" style="left:0px;top:1040px;width:1920px;height:40px;background:linear-gradient(90deg,#223840,#213541 45%,#1c2a42);"></div>
<svg style="left:15px;top:1051px" width="18" height="18" viewBox="0 0 18 18"><path d="M0 2.3 L7 1.3 V8.2 H0z M8 1.1 L17.5 0 V8.2 H8z M0 9.2 H7 V16.1 L0 15.1z M8 9.2 H17.5 V17.4 L8 16.3z" fill="#fff"/></svg>
<svg style="left:63px;top:1051px" width="18" height="17" viewBox="0 0 18 17"><path d="M1.5 0.8 V3.5 H11.5 V0.8 M1.5 16.2 V13.6 H11.5 V16.2" fill="none" stroke="#fff" stroke-width="1.2"/><rect x="1.6" y="5.4" width="9.8" height="6.2" fill="none" stroke="#fff" stroke-width="1.2"/><path d="M15.5 1 V4 M15.5 9 V16" stroke="#fff" stroke-width="1.2"/><rect x="14" y="5" width="3" height="3" fill="#fff"/></svg>
<svg style="left:111px;top:1048px" width="24" height="24" viewBox="0 0 24 24"><defs><linearGradient id="eg1" x1="0" y1="0" x2="1" y2="0.6"><stop offset="0" stop-color="#36c8f6"/><stop offset="0.5" stop-color="#2ec4c8"/><stop offset="1" stop-color="#6eea52"/></linearGradient></defs>
<circle cx="12" cy="12" r="12" fill="url(#eg1)"/>
<path d="M-0.2 12 C0.5 7.5 4.5 5.2 8.8 5.8 C12 6.3 14.2 8.2 14.6 10.2 C11 9.2 8.2 11.5 8.6 15 C9.1 19.5 14.5 21 20.8 17.6 L23.2 17 A12.2 12.2 0 0 1 -0.2 12z" fill="#1583dc"/>
<path d="M8.6 15 C9.1 19.5 14.5 21 20.8 17.6 L23.2 17 A12.2 12.2 0 0 1 12.5 24.2 C9.5 23 8 19 8.6 15z" fill="#0d56a4"/>
<path d="M9.6 12.8 C9.8 10.2 12.4 9.2 14.4 10.4 C13.5 11.6 12.8 12.8 13 14 C13.6 15.6 16 16.5 20.5 16.6 C16 18.2 10 17.5 9.6 12.8z" fill="#22343d"/></svg>
<svg style="left:161px;top:1051px" width="22" height="18" viewBox="0 0 22 18"><path d="M0 1.2 a1 1 0 0 1 1 -1 H8 L10 2 H21 a1 1 0 0 1 1 1 V17 H0z" fill="#e3a21a"/><rect x="0" y="3" width="22" height="14.5" fill="#fcd462"/><path d="M4.2 18 V10.5 a1.5 1.5 0 0 1 1.5 -1.5 H16.3 a1.5 1.5 0 0 1 1.5 1.5 V18 H14 V13.5 H8 V18z" fill="#3d95e0"/></svg>
<div class="a" style="left:152px;top:1078px;width:40px;height:2px;background:#76b9ed;"></div>
<svg style="left:209px;top:1049px" width="24" height="24" viewBox="0 0 24 24"><path d="M6 5 V2 a1 1 0 0 1 1 -1 H17 a1 1 0 0 1 1 1 V5" fill="none" stroke="#28a8ea" stroke-width="1.8"/>
<defs><linearGradient id="st1" x1="0" y1="0" x2="0" y2="1"><stop offset="0" stop-color="#ffffff"/><stop offset="1" stop-color="#e4e4e4"/></linearGradient></defs><rect x="0.5" y="4.5" width="23" height="19" rx="2.5" fill="url(#st1)"/>
<rect x="7" y="9.5" width="4" height="4" fill="#f25022"/><rect x="12" y="9.5" width="4" height="4" fill="#7fba00"/>
<rect x="7" y="14.5" width="4" height="4" fill="#00a4ef"/><rect x="12" y="14.5" width="4" height="4" fill="#ffb900"/></svg>
<svg style="left:258px;top:1047px" width="24" height="25" viewBox="0 0 24 25"><defs><radialGradient id="ff1" cx="0.72" cy="0.15" r="1"><stop offset="0" stop-color="#fff44f"/><stop offset="0.3" stop-color="#ffd13a"/><stop offset="0.55" stop-color="#ff8a24"/><stop offset="0.8" stop-color="#ff3b3f"/><stop offset="1" stop-color="#e31587"/></radialGradient>
<radialGradient id="ff2" cx="0.5" cy="0.55" r="0.6"><stop offset="0" stop-color="#8f62ff"/><stop offset="1" stop-color="#5a3ccc"/></radialGradient></defs>
<path d="M11.8 24 C5.4 24 0.5 19 0.5 12.6 C0.5 9.4 1.6 6.8 3.5 4.8 L4.6 4.6 L5 7.6 L7.6 4.8 L8.2 7.8 C10.2 7.2 12.2 7.5 14 8.4 C14 5.8 14.4 3 15.2 0.8 C17.6 2.6 20.2 5.2 21.8 7.6 C23.2 9.8 23.6 12 23.6 13.2 C23.6 19.4 18.4 24 11.8 24z" fill="url(#ff1)"/>
<circle cx="11.6" cy="13.4" r="4.8" fill="url(#ff2)"/>
<path d="M3.2 9.6 C6 9 9.2 10 10.6 11.6 C9.2 12.4 8.2 13.6 8.2 15.4 C6 14.4 4 12.2 3.2 9.6z" fill="#ffa739"/></svg>
<div class="a" style="left:250px;top:1078px;width:40px;height:2px;background:#76b9ed;"></div>
<div class="a" style="left:295px;top:1040px;width:48px;height:40px;background:#4b5d66;"></div>
<svg style="left:308px;top:1049px" width="23" height="22" viewBox="0 0 23 22"><path d="M12 3 h5 a5.5 2 0 0 1 5.5 2 v12 a5.5 2 0 0 1 -5.5 2 H12z" fill="#fff" stroke="#a4373a" stroke-width="1.3"/>
<path d="M12.5 8 a5 1.7 0 0 0 9.5 0 M12.5 12 a5 1.7 0 0 0 9.5 0 M12.5 16 a5 1.7 0 0 0 9.5 0" fill="none" stroke="#a4373a" stroke-width="1.3"/>
<path d="M0 2.8 L13 0.3 V21.7 L0 19.2z" fill="#a4373a"/>
<path d="M3 16 L6 6.8 h2 L11 16 h-2 l-0.7 -2.3 h-3.1 l-0.7 2.3z M5.7 12 h2.2 L6.8 8.2z" fill="#fff"/></svg>
<div class="a" style="left:295px;top:1078px;width:48px;height:2px;background:#76b9ed;"></div>
<svg style="left:1698px;top:1056px" width="14" height="8" viewBox="0 0 14 8"><path d="M1 6.8 L7 0.9 L13 6.8" fill="none" stroke="#fff" stroke-width="1.2"/></svg>
<svg style="left:1721px;top:1052px" width="16" height="16" viewBox="0 0 16 16"><circle cx="8" cy="8" r="8.2" fill="#ff7d00"/><path d="M6.1 3.9 a1.9 1.9 0 0 1 3.4 -1.3 L14.4 12.5 L13.6 13.1z M4 8.3 a1.4 1.4 0 0 1 2.4 -1.1 L13.7 13.3 L12.9 13.8z M2.3 10.9 a1 1 0 0 1 1.6 -0.9 L13 14 L12.3 14.4z" fill="#fff"/></svg>
<svg style="left:1745px;top:1054px" width="17" height="14" viewBox="0 0 17 14"><rect x="4.6" y="0.6" width="11.2" height="9" fill="none" stroke="#fff" stroke-width="1.1"/><path d="M9.5 9.5 V12 M6 12.5 H13" stroke="#fff" stroke-width="1.1"/><rect x="0.5" y="0.5" width="4.5" height="5" fill="#1c2a42" stroke="#fff" stroke-width="1"/><path d="M1.8 2.4 L2.8 3.6 L3.8 2.4" fill="none" stroke="#fff" stroke-width="0.7"/><path d="M2.7 5.5 V13.5" stroke="#fff" stroke-width="1.1"/></svg>
<div class="t" style="left:1770.06px;top:1053.82px;font-size:11.5px;line-height:11.5px;color:#ffffff;">ENG</div>
<div class="t" style="left:1819.44px;top:1045.00px;font-size:12px;line-height:12px;color:#ffffff;transform:scaleX(0.9336);transform-origin:0 0;">21:03</div>
<div class="t" style="left:1806.59px;top:1063.00px;font-size:12px;line-height:12px;color:#ffffff;transform:scaleX(0.9132);transform-origin:0 0;">30.10.2025</div>
<svg style="left:1879px;top:1052px" width="17" height="17" viewBox="0 0 17 17"><path d="M0.6 0.6 H16.4 V12.4 H10.5 L8.5 15.5 L6.5 12.4 H0.6z" fill="none" stroke="#fff" stroke-width="1.2"/></svg>
<div class="a" style="left:1915px;top:1040px;width:1px;height:40px;background:#5a6a80;"></div>
</body></html>
